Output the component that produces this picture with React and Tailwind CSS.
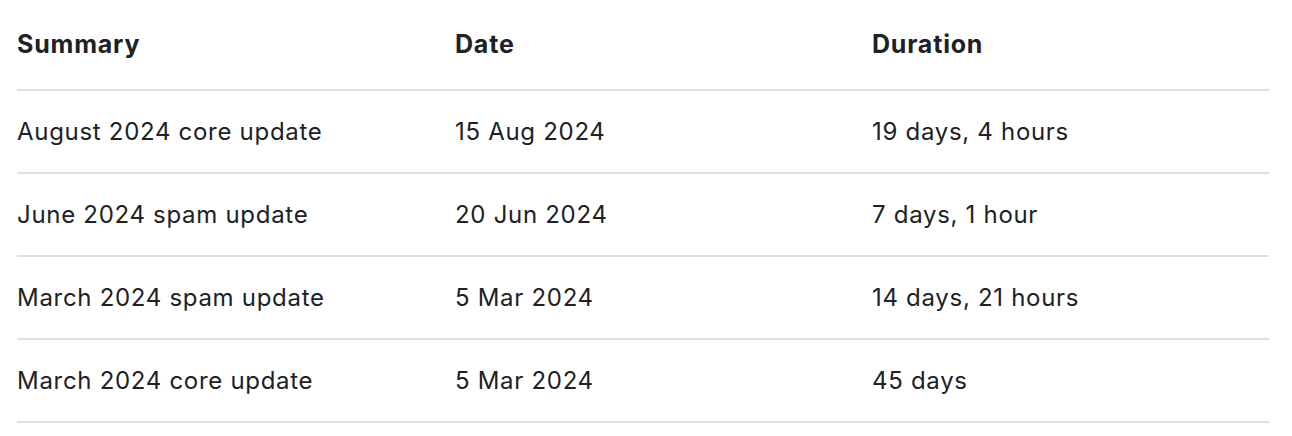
const rows = [
  { summary: "August 2024 core update", date: "15 Aug 2024", duration: "19 days, 4 hours" },
  { summary: "June 2024 spam update", date: "20 Jun 2024", duration: "7 days, 1 hour" },
  { summary: "March 2024 spam update", date: "5 Mar 2024", duration: "14 days, 21 hours" },
  { summary: "March 2024 core update", date: "5 Mar 2024", duration: "45 days" },
];

export default function App() {
  return (
    <div className="bg-white w-[1292px] h-[436px] pl-[17px] font-['Inter',sans-serif] text-[#202124]">
      <table className="w-[1252px] border-collapse table-fixed">
        <thead>
          <tr className="h-[90px] border-b-2 border-[#dfdfe3] text-[25px] tracking-[0.8px]">
            <th className="w-[438px] text-left font-bold">Summary</th>
            <th className="w-[417px] text-left font-bold">Date</th>
            <th className="text-left font-bold">Duration</th>
          </tr>
        </thead>
        <tbody>
          {rows.map((r) => (
            <tr key={r.summary} className="h-[83px] border-b-2 border-[#dfdfe3] text-[24px] tracking-[0.7px]">
              <td>{r.summary}</td>
              <td>{r.date}</td>
              <td>{r.duration}</td>
            </tr>
          ))}
        </tbody>
      </table>
    </div>
  );
}
